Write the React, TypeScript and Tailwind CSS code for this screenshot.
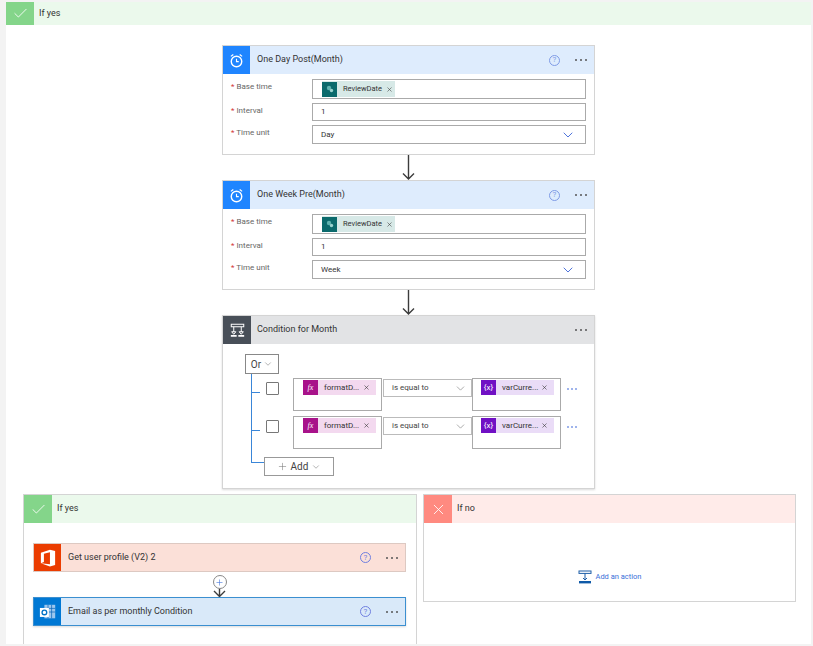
import type { ReactNode } from "react";
import { Check, ChevronDown, Plus, X } from "lucide-react";

function Dots({ color = "bg-[#555]", gap = "gap-[3px]" }: { color?: string; gap?: string }) {
  return (
    <div className={`flex ${gap}`}>
      <span className={`h-[2px] w-[2px] rounded-full ${color}`} />
      <span className={`h-[2px] w-[2px] rounded-full ${color}`} />
      <span className={`h-[2px] w-[2px] rounded-full ${color}`} />
    </div>
  );
}

function HelpDots({ tone = "text-[#7f9be6]" }: { tone?: string }) {
  return (
    <div className="flex items-center gap-[15px] pr-[7px]">
      <div className={`flex h-[11px] w-[11px] items-center justify-center rounded-full border border-current text-[8px] leading-none ${tone}`}>
        ?
      </div>
      <Dots />
    </div>
  );
}

function ClockIcon() {
  return (
    <svg viewBox="0 0 16 16" className="h-[15px] w-[15px]" fill="none" stroke="white" strokeWidth="1.5">
      <circle cx="8" cy="9" r="5.6" />
      <path d="M8 6v3.2h2.4" strokeWidth="1.2" />
      <path d="M2 3.6 4.6 1.6M14 3.6 11.4 1.6" strokeWidth="1.3" />
    </svg>
  );
}

function ConditionIcon() {
  return (
    <svg viewBox="0 0 18 18" className="h-[15px] w-[15px]" fill="none" stroke="white" strokeWidth="1.2">
      <rect x="1.5" y="1.5" width="15" height="3" />
      <path d="M4.5 4.5v6M13.5 4.5v6M2 10.5h5l-2.5 3zM11 10.5h5l-2.5 3z" />
      <path d="M1 15.5h7M10 15.5h7" strokeWidth="2" />
    </svg>
  );
}

function AddActionIcon() {
  return (
    <svg viewBox="0 0 14 14" className="h-[14px] w-[14px]" fill="none" stroke="#1f5fa8" strokeWidth="1">
      <rect x="1" y="1" width="12" height="2.4" />
      <path d="M7 3.4v6.6M5 8l2 2 2-2" />
      <rect x="1" y="11" width="12" height="2.4" fill="#0f5aa8" stroke="none" />
    </svg>
  );
}

function OfficeLogo() {
  return (
    <svg viewBox="0 0 18 20" className="h-[18px] w-[16px]">
      <path fill="white" d="M1 4.2 11.2.6 17 2.2v15.6l-5.8 1.7L1 15.9l10.2 1.2V3.6L4.4 5.3v9.3L1 15.9z" />
    </svg>
  );
}

function OutlookLogo() {
  return (
    <svg viewBox="0 0 20 20" className="h-[18px] w-[18px]">
      <rect x="6" y="2" width="12" height="15" fill="#9cc7ee" />
      <path d="M6 6h12M6 10h12M10 2v15M14 2v15" stroke="#0a64b8" strokeWidth="0.8" />
      <rect x="1" y="5.5" width="10" height="10" fill="white" />
      <circle cx="6" cy="10.5" r="2.6" fill="none" stroke="#0072c6" strokeWidth="1.5" />
    </svg>
  );
}

function ReviewChip() {
  return (
    <div className="flex h-[16px] items-center bg-[#d7e9e7]">
      <div className="flex h-[15px] w-[15px] items-center justify-center bg-[#0b6a6c]">
        <svg viewBox="0 0 10 10" className="h-[10px] w-[10px]">
          <circle cx="4" cy="4" r="2.2" fill="#5fb3b0" />
          <circle cx="6.5" cy="6.5" r="1.7" fill="#9ad3cf" />
        </svg>
      </div>
      <span className="pl-[6px] text-[7.5px] text-[#333]">ReviewDate</span>
      <X className="ml-[4px] mr-[2px] h-[7px] w-[7px] text-[#444]" strokeWidth={2} />
    </div>
  );
}

function FormRow({ label, className, children }: { label: string; className: string; children: ReactNode }) {
  return (
    <div className="flex">
      <div className="w-[89px] pl-[8px] pt-[2px] text-[8px] leading-[12px] text-[#666]">
        <span className="text-[#d13438]">* </span>
        {label}
      </div>
      <div className={`flex w-[274px] items-center border border-[#aaa] bg-white text-[8px] text-[#333] ${className}`}>
        {children}
      </div>
    </div>
  );
}

function DelayCard({ title, unit }: { title: string; unit: string }) {
  return (
    <div className="w-[373px] border border-[#d4d4d4] bg-white">
      <div className="flex h-[28px] items-center bg-[#deecfd]">
        <div className="flex h-[28px] w-[27px] items-center justify-center bg-[#1f85ff]">
          <ClockIcon />
        </div>
        <div className="flex-1 pl-[7px] text-[9px] text-[#333]">{title}</div>
        <HelpDots />
      </div>
      <div className="flex flex-col gap-[4px] pt-[5px] pb-[10px]">
        <FormRow label="Base time" className="h-[20px] pl-[9px]">
          <ReviewChip />
        </FormRow>
        <FormRow label="Interval" className="h-[18px] pl-[8px]">1</FormRow>
        <FormRow label="Time unit" className="h-[19px] justify-between pl-[8px] pr-[9px]">
          <span>{unit}</span>
          <ChevronDown className="h-[16px] w-[16px] text-[#4f74dc]" strokeWidth={1.5} />
        </FormRow>
      </div>
    </div>
  );
}

function Arrow() {
  return (
    <svg viewBox="0 0 13 25" className="h-[25px] w-[13px]" fill="none" stroke="#3c3c3c" strokeWidth="1.4">
      <path d="M6.5 0v24M1 18.5l5.5 5.5 5.5-5.5" />
    </svg>
  );
}

function TokenField({ kind }: { kind: "fx" | "var" }) {
  const isFx = kind === "fx";
  return (
    <div className={`h-[33px] w-[89px] border border-[#aaa] bg-white pt-[1px] ${isFx ? "pl-[9px]" : "pl-[8px]"}`}>
      <div className={`flex h-[15px] w-[73px] items-center ${isFx ? "bg-[#f3d9ef]" : "bg-[#eadcf7]"}`}>
        <div
          className={`flex h-[15px] w-[15px] items-center justify-center text-[8px] text-white ${
            isFx ? "bg-[#a8128a] font-['Liberation_Serif',serif] italic" : "bg-[#7010c4]"
          }`}
        >
          {isFx ? "fx" : "{x}"}
        </div>
        <span className="flex-1 pl-[6px] text-[8px] text-[#333]">{isFx ? "formatD..." : "varCurre..."}</span>
        <X className="mr-[6px] h-[7px] w-[7px] text-[#333]" strokeWidth={2} />
      </div>
    </div>
  );
}

function ConditionRow() {
  return (
    <div className="flex items-start">
      <div className="mt-[14px] h-[1px] w-[8px] bg-[#3a86d8]" />
      <div className="ml-[6px] mt-[4px] h-[13px] w-[13px] rounded-[1px] border-[1.5px] border-[#777] bg-white" />
      <div className="ml-[14px] flex items-start">
        <TokenField kind="fx" />
        <div className="ml-[1px] mt-[1px] flex h-[18px] w-[89px] items-center justify-between border border-[#bbb] bg-white pl-[8px] pr-[4px] text-[8px] text-[#444]">
          <span>is equal to</span>
          <ChevronDown className="h-[13px] w-[13px] text-[#999]" strokeWidth={1.5} />
        </div>
        <TokenField kind="var" />
        <div className="ml-[6px] mt-[10px]">
          <Dots color="bg-[#7f9be6]" gap="gap-[2px]" />
        </div>
      </div>
    </div>
  );
}

function ConditionCard() {
  return (
    <div className="h-[174px] w-[373px] border border-[#d4d4d4] bg-white shadow-[0_1px_2px_rgba(0,0,0,0.15)]">
      <div className="flex h-[28px] items-center bg-[#e2e3e5]">
        <div className="flex h-[28px] w-[28px] items-center justify-center bg-[#484f58]">
          <ConditionIcon />
        </div>
        <div className="flex-1 pl-[6px] text-[9px] text-[#333]">Condition for Month</div>
        <div className="pr-[7px]">
          <Dots />
        </div>
      </div>
      <div className="pl-[22px] pt-[10px]">
        <div className="flex h-[20px] w-[34px] items-center justify-center gap-[2px] border border-[#888] text-[10px] text-[#444]">
          Or
          <ChevronDown className="h-[10px] w-[10px] text-[#888]" strokeWidth={1.5} />
        </div>
        <div className="ml-[6px] flex flex-col gap-[5px] border-l border-[#3a86d8] pb-[1px] pt-[4px]">
          <ConditionRow />
          <ConditionRow />
        </div>
        <div className="ml-[6px] flex items-start">
          <div className="h-[13px] w-[13px] border-b border-l border-[#3a86d8]" />
          <div className="mt-[7px] flex h-[19px] w-[70px] items-center justify-center gap-[3px] border border-[#999] bg-white text-[10px] text-[#444]">
            <Plus className="h-[11px] w-[11px] text-[#777]" strokeWidth={1.2} />
            Add
            <ChevronDown className="h-[10px] w-[10px] text-[#888]" strokeWidth={1.5} />
          </div>
        </div>
      </div>
    </div>
  );
}

function BranchHeader({ yes, label, height }: { yes: boolean; label: string; height: string }) {
  return (
    <div className={`flex items-center ${height} ${yes ? "bg-[#ebf9ec]" : "bg-[#ffebe9]"}`}>
      <div className={`flex h-full w-[28px] items-center justify-center ${yes ? "bg-[#84d58a]" : "bg-[#ff8a80]"}`}>
        {yes ? (
          <Check className="h-[17px] w-[17px] text-white" strokeWidth={1.2} />
        ) : (
          <X className="h-[17px] w-[17px] text-white" strokeWidth={1.2} />
        )}
      </div>
      <div className="pl-[5px] text-[9px] text-[#333]">{label}</div>
    </div>
  );
}

function ActionRow({ title, head, body, border, children }: { title: string; head: string; body: string; border: string; children: ReactNode }) {
  return (
    <div className={`flex h-[29px] w-[373px] items-center border ${border} ${body}`}>
      <div className={`flex h-full w-[27px] items-center justify-center ${head}`}>{children}</div>
      <div className="flex-1 pl-[7px] text-[9px] text-[#333]">{title}</div>
      <HelpDots tone="text-[#6f7fe0]" />
    </div>
  );
}

export default function App() {
  return (
    <div className="h-[646px] w-[813px] overflow-hidden bg-[#f3f3f3] pl-[6px] pr-[2px] pt-[2px] font-['Roboto',sans-serif]">
      <div className="h-[642px] overflow-hidden bg-white">
        <BranchHeader yes label="If yes" height="h-[23px]" />
        <div className="flex flex-col items-center pt-[20px]">
          <DelayCard title="One Day Post(Month)" unit="Day" />
          <Arrow />
          <DelayCard title="One Week Pre(Month)" unit="Week" />
          <Arrow />
          <ConditionCard />
        </div>
        <div className="flex items-start gap-[6px] pl-[17px] pt-[5px]">
          <div className="h-[160px] w-[394px] border border-[#d4d4d4] bg-white">
            <BranchHeader yes label="If yes" height="h-[28px]" />
            <div className="flex flex-col items-start pl-[9px] pt-[20px]">
              <ActionRow title="Get user profile (V2) 2" head="bg-[#eb3c00]" body="bg-[#fbe0d8]" border="border-[#ddc9c2]">
                <OfficeLogo />
              </ActionRow>
              <div className="relative flex h-[25px] w-[373px] justify-center">
                <div className="absolute top-[3px] flex h-[14px] w-[14px] items-center justify-center rounded-full border border-[#888] bg-white">
                  <Plus className="h-[9px] w-[9px] text-[#3a6fd8]" strokeWidth={1.5} />
                </div>
                <svg viewBox="0 0 13 8" className="absolute bottom-0 h-[8px] w-[13px]" fill="none" stroke="#3c3c3c" strokeWidth="1.4">
                  <path d="M6.5 0v7.5M1 2l5.5 5.5L12 2" />
                </svg>
              </div>
              <ActionRow title="Email as per monthly Condition" head="bg-[#0078d4]" body="bg-[#d9e9f9] shadow-[0_1px_2px_rgba(0,0,0,0.15)]" border="border-[#3b8fd0]">
                <OutlookLogo />
              </ActionRow>
            </div>
          </div>
          <div className="h-[108px] w-[373px] border border-[#d4d4d4] bg-white">
            <BranchHeader yes={false} label="If no" height="h-[28px]" />
            <div className="flex items-center justify-center gap-[4px] pt-[47px]">
              <AddActionIcon />
              <span className="text-[7.5px] text-[#3a6fd8]">Add an action</span>
            </div>
          </div>
        </div>
      </div>
    </div>
  );
}
